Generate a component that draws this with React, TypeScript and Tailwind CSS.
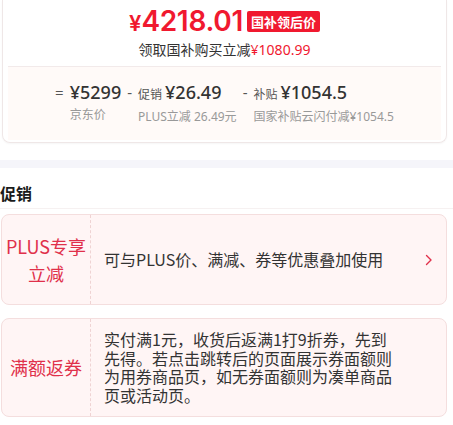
const breakdown = [
  { op: "=", value: "¥5299", tag: "", label: "京东价" },
  { op: "-", value: "¥26.49", tag: "促销", label: "PLUS立减 26.49元" },
  { op: "-", value: "¥1054.5", tag: "补贴", label: "国家补贴云闪付减¥1054.5" },
];

const promos = [
  {
    id: "plus",
    title: "PLUS专享\n立减",
    desc: "可与PLUS价、满减、券等优惠叠加使用",
    link: true,
  },
  {
    id: "coupon",
    title: "满额返券",
    desc: "实付满1元，收货后返满1打9折券，先到先得。若点击跳转后的页面展示券面额则为用券商品页，如无券面额则为凑单商品页或活动页。",
    link: false,
  },
];

function Chevron() {
  return (
    <svg width="8" height="12" viewBox="0 0 8 12" fill="none" className="shrink-0">
      <path d="M1.5 1.5 L6 6 L1.5 10.5" stroke="#e0304a" strokeWidth="1.4" strokeLinecap="round" strokeLinejoin="round" />
    </svg>
  );
}

export default function App() {
  return (
    <div className="w-[453px] h-[425px] overflow-hidden bg-white text-[#333] font-['Noto_Sans','Noto_Sans_CJK_SC',sans-serif]">
      {/* Price card */}
      <div className="ml-[2px] w-[445px] border-x border-b border-[#efe7e7] rounded-b-[8px] px-[5px] pb-[2px] shadow-[0_1px_2px_rgba(0,0,0,0.04)]">
        <div className="h-[66px] flex flex-col items-center pt-[7px]">
          <div className="flex items-center">
            <span className="flex items-baseline text-[#f0192f] font-semibold font-['Inter','Noto_Sans_CJK_SC',sans-serif] leading-none">
              <span className="text-[22px]">¥</span>
              <span className="text-[28px] tracking-[-0.3px]">4218.01</span>
            </span>
            <span className="ml-[4px] bg-[#f0192f] text-white text-[13px] font-bold leading-[21px] px-[4px] rounded-[2px] font-['Noto_Sans_CJK_SC',sans-serif]">
              国补领后价
            </span>
          </div>
          <p className="mt-[5px] text-[14px] leading-[18px] text-[#333] font-['Noto_Sans_CJK_SC',sans-serif]">
            领取国补购买立减<span className="text-[#f0192f] font-['Noto_Sans','Noto_Sans_CJK_SC',sans-serif]">¥1080.99</span>
          </p>
        </div>

        <div className="h-[74px] border-t border-[#f2eaea] bg-[#fffaf8] flex justify-center gap-[6px] pt-[13px]">
          {breakdown.map((b) => (
            <div key={b.label} className="grid grid-cols-[auto_auto] content-start">
              <span className="text-[15px] leading-[24px] text-[#555] pr-[6px]">{b.op}</span>
              <span className="flex items-baseline whitespace-nowrap leading-[24px]">
                {b.tag && <span className="text-[12px] text-[#555] mr-[3px] font-['Noto_Sans_CJK_SC',sans-serif]">{b.tag}</span>}
                <span className="text-[18px] font-medium text-[#333]">{b.value}</span>
              </span>
              <span />
              <span className="text-[12px] leading-[16px] mt-[3px] text-[#999] whitespace-nowrap">{b.label}</span>
            </div>
          ))}
        </div>
      </div>

      <div className="h-[17px]" />
      <div className="h-[8px] bg-[#f5f5fa]" />

      {/* Promotions */}
      <div className="h-[41px] pt-[14px] border-b border-[#f6f1f1]">
        <h2 className="text-[16px] leading-[22px] font-bold text-[#1a1a1a] font-['Noto_Sans_CJK_SC',sans-serif]">促销</h2>
      </div>

      <div className="pl-[1px] pt-[5px] flex flex-col gap-[13px] font-['Noto_Sans_CJK_SC',sans-serif]">
        {promos.map((p) => (
          <div key={p.id} className="w-[446px] min-h-[91px] flex rounded-[8px] border border-[#f4dede] bg-[#fff5f5]">
            <div className="w-[89px] shrink-0 flex items-center justify-center border-r border-dashed border-[#efd3d3]">
              <p className="text-[18px] leading-[27px] text-[#e0304a] text-center whitespace-pre-line">{p.title}</p>
            </div>
            <div className="flex-1 flex items-center justify-between pl-[13px] pr-[13px] py-[11px]">
              <p className="w-[292px] text-[16px] leading-[18.7px] text-[#333]">{p.desc}</p>
              {p.link && <Chevron />}
            </div>
          </div>
        ))}
      </div>
    </div>
  );
}
